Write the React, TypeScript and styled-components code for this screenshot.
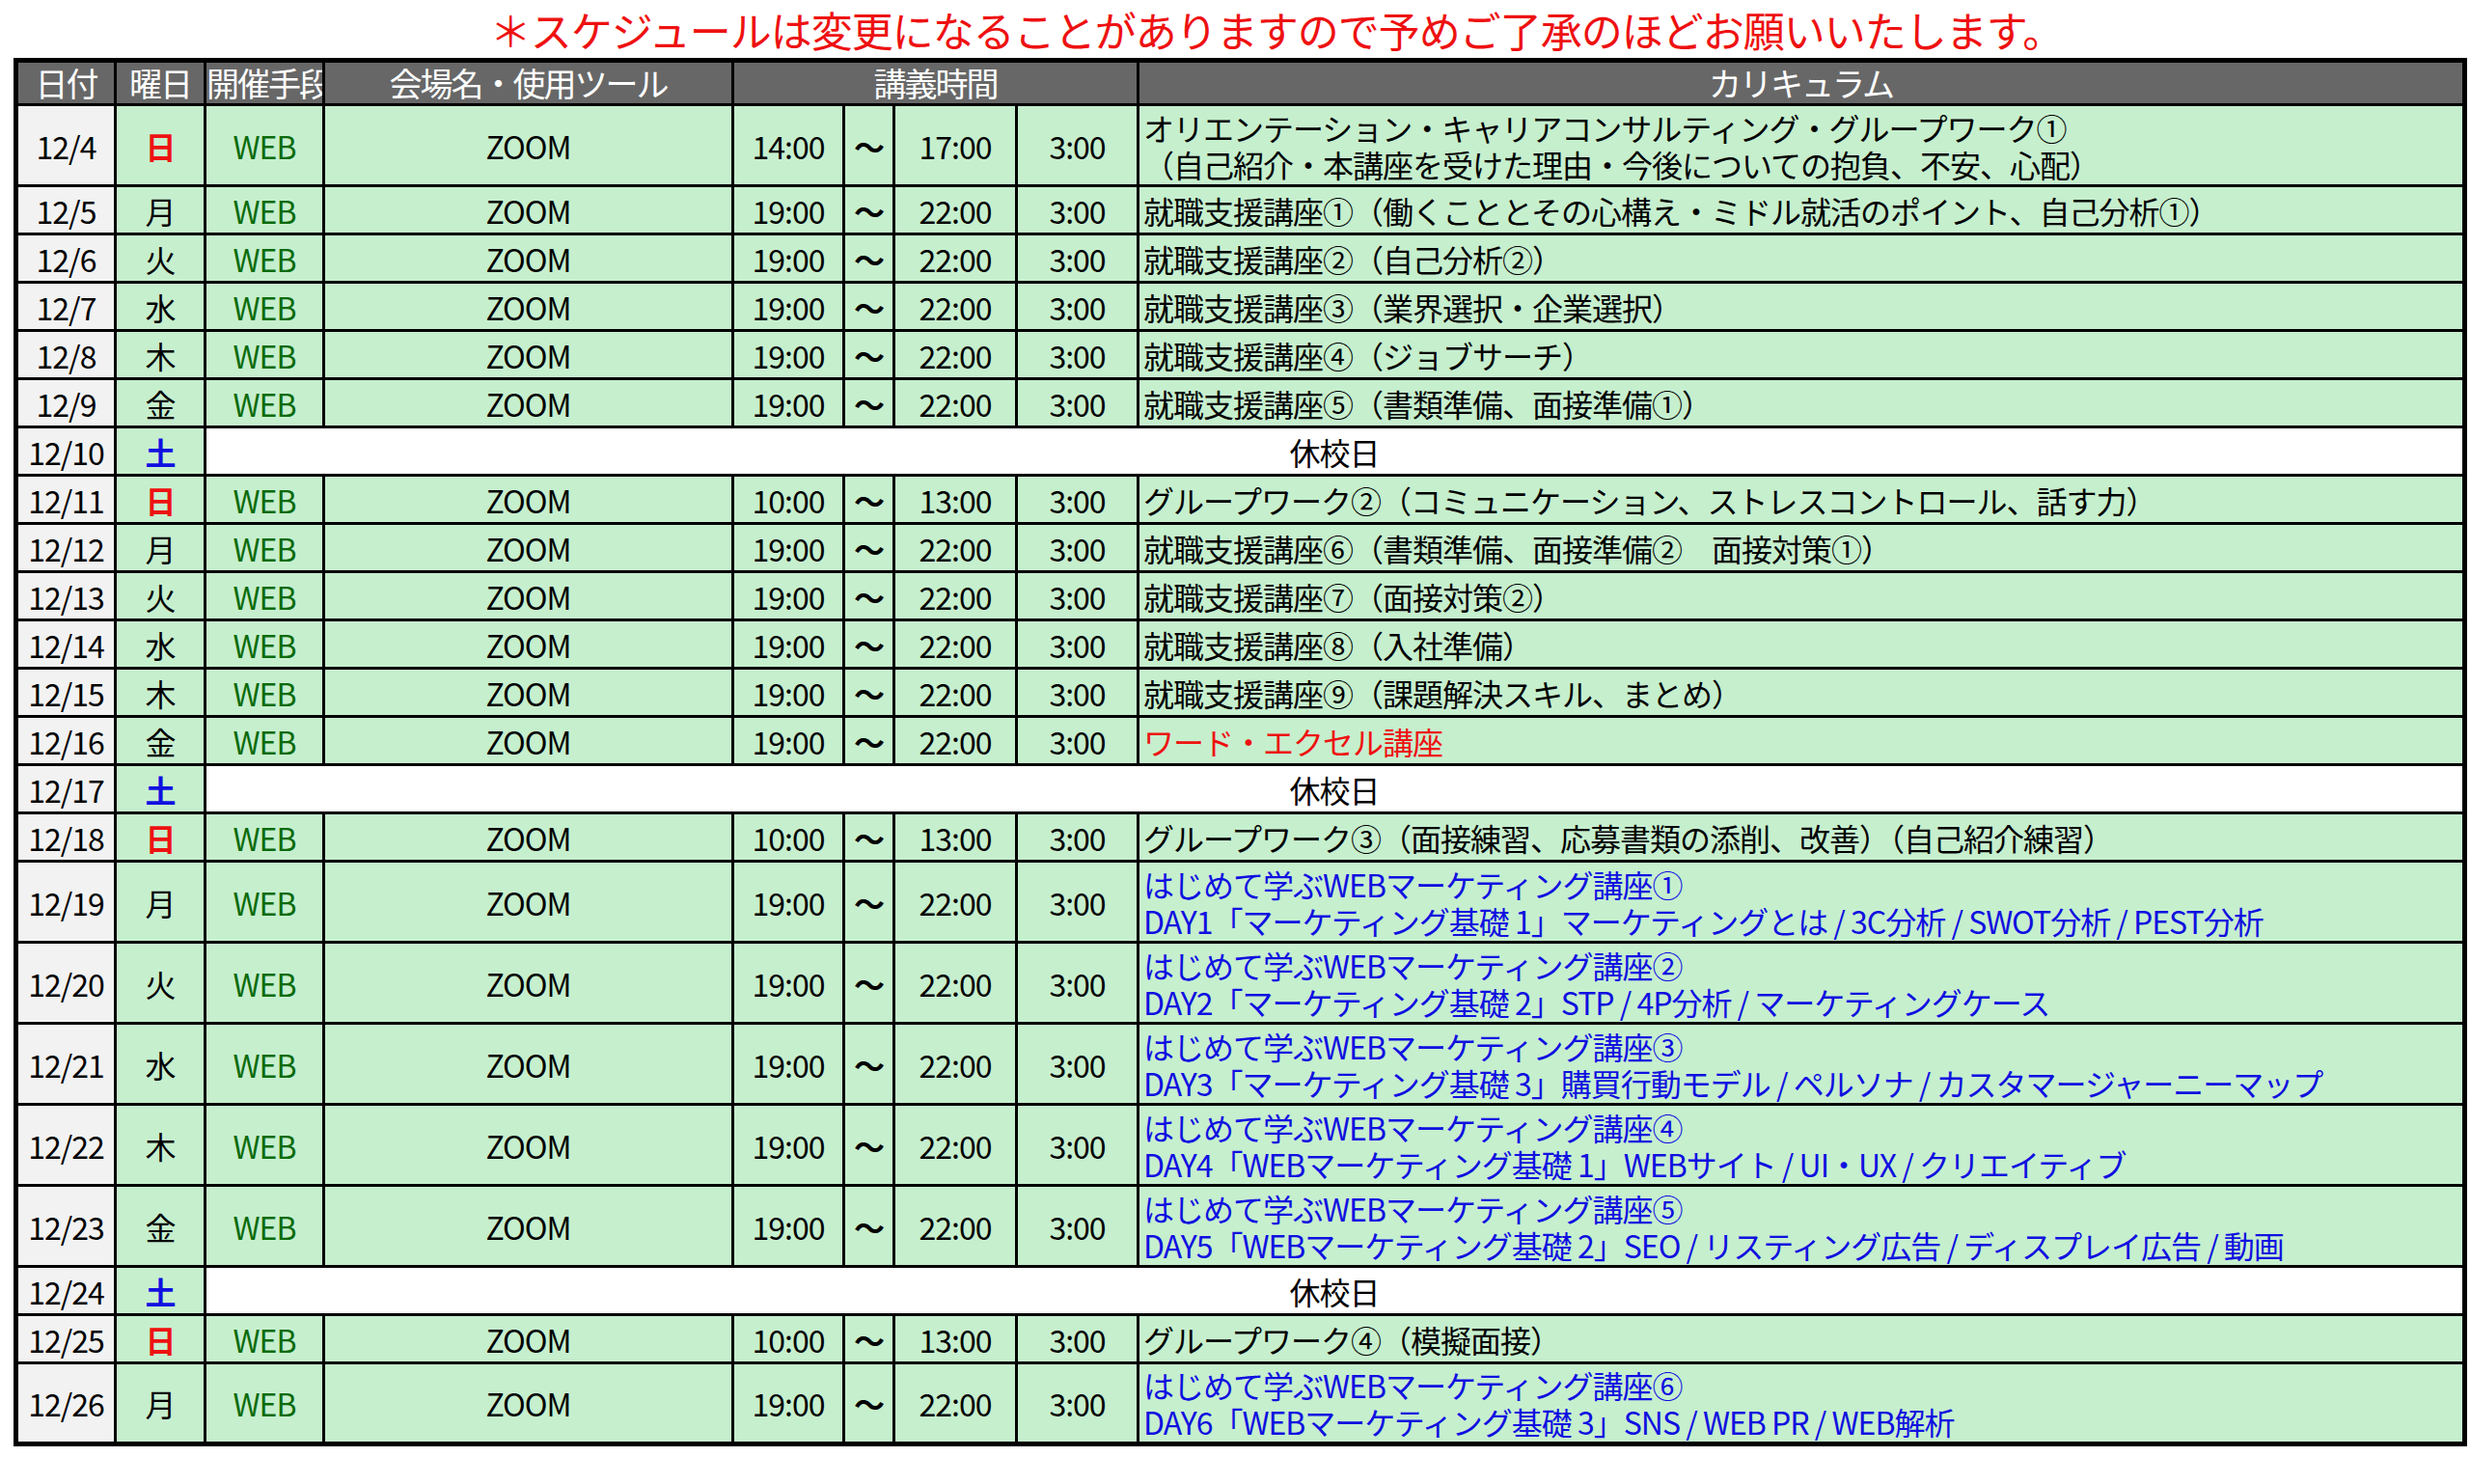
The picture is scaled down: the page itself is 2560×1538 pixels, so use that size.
import React from "react";
import styled, { createGlobalStyle } from "styled-components";

const Global = createGlobalStyle`
  body { margin: 0; background: #fff; font-family: "Noto Sans CJK JP", "Liberation Sans", sans-serif; }
`;

const Page = styled.div`
  width: 2560px;
  height: 1538px;
  padding: 0 8px 0 14px;
  box-sizing: border-box;
`;

const Notice = styled.div`
  height: 60px;
  text-align: center;
  color: #ee1111;
  font-size: 43px;
  line-height: 60px;
  padding-left: 80px;
  letter-spacing: -1px;
  white-space: nowrap;
`;

const Table = styled.table`
  border-collapse: collapse;
  border: 5px solid #000;
  width: 2538px;
  table-layout: fixed;
  font-size: 32px;
  letter-spacing: -1px;
`;

const Th = styled.th`
  background: #676767;
  color: #fff;
  font-weight: 400;
  height: 42px;
  border: 3px solid #000;
  font-size: 34px;
  line-height: 38px;
  padding: 0;
  white-space: nowrap;
  overflow: hidden;
  letter-spacing: -2px;
`;

const Td = styled.td<{ $bg?: string; $color?: string; $bold?: boolean; $left?: boolean }>`
  background: ${(p) => p.$bg || "#c6efce"};
  color: ${(p) => p.$color || "#000"};
  font-weight: ${(p) => (p.$bold ? 700 : 400)};
  text-align: ${(p) => (p.$left ? "left" : "center")};
  border: 3px solid #000;
  padding: 0 4px;
  line-height: 38px;
  white-space: nowrap;
  overflow: hidden;
`;

const Tr = styled.tr<{ $double?: boolean }>`
  height: ${(p) => (p.$double ? 84 : 50)}px;
`;

type Row = { d: string; w: string; s?: string; e?: string; c?: string[]; color?: string; off?: boolean };

const rows: Row[] = [
  { d: "12/4", w: "日", s: "14:00", e: "17:00", c: ["オリエンテーション・キャリアコンサルティング・グループワーク①", "（自己紹介・本講座を受けた理由・今後についての抱負、不安、心配）"] },
  { d: "12/5", w: "月", s: "19:00", e: "22:00", c: ["就職支援講座①（働くこととその心構え・ミドル就活のポイント、自己分析①）"] },
  { d: "12/6", w: "火", s: "19:00", e: "22:00", c: ["就職支援講座②（自己分析②）"] },
  { d: "12/7", w: "水", s: "19:00", e: "22:00", c: ["就職支援講座③（業界選択・企業選択）"] },
  { d: "12/8", w: "木", s: "19:00", e: "22:00", c: ["就職支援講座④（ジョブサーチ）"] },
  { d: "12/9", w: "金", s: "19:00", e: "22:00", c: ["就職支援講座⑤（書類準備、面接準備①）"] },
  { d: "12/10", w: "土", off: true },
  { d: "12/11", w: "日", s: "10:00", e: "13:00", c: ["グループワーク②（コミュニケーション、ストレスコントロール、話す力）"] },
  { d: "12/12", w: "月", s: "19:00", e: "22:00", c: ["就職支援講座⑥（書類準備、面接準備②　面接対策①）"] },
  { d: "12/13", w: "火", s: "19:00", e: "22:00", c: ["就職支援講座⑦（面接対策②）"] },
  { d: "12/14", w: "水", s: "19:00", e: "22:00", c: ["就職支援講座⑧（入社準備）"] },
  { d: "12/15", w: "木", s: "19:00", e: "22:00", c: ["就職支援講座⑨（課題解決スキル、まとめ）"] },
  { d: "12/16", w: "金", s: "19:00", e: "22:00", c: ["ワード・エクセル講座"], color: "#ee1111" },
  { d: "12/17", w: "土", off: true },
  { d: "12/18", w: "日", s: "10:00", e: "13:00", c: ["グループワーク③（面接練習、応募書類の添削、改善）（自己紹介練習）"] },
  { d: "12/19", w: "月", s: "19:00", e: "22:00", color: "#1010e0", c: ["はじめて学ぶWEBマーケティング講座①", "DAY1「マーケティング基礎 1」マーケティングとは / 3C分析 / SWOT分析 / PEST分析"] },
  { d: "12/20", w: "火", s: "19:00", e: "22:00", color: "#1010e0", c: ["はじめて学ぶWEBマーケティング講座②", "DAY2「マーケティング基礎 2」STP / 4P分析 / マーケティングケース"] },
  { d: "12/21", w: "水", s: "19:00", e: "22:00", color: "#1010e0", c: ["はじめて学ぶWEBマーケティング講座③", "DAY3「マーケティング基礎 3」購買行動モデル / ペルソナ / カスタマージャーニーマップ"] },
  { d: "12/22", w: "木", s: "19:00", e: "22:00", color: "#1010e0", c: ["はじめて学ぶWEBマーケティング講座④", "DAY4「WEBマーケティング基礎 1」WEBサイト / UI・UX / クリエイティブ"] },
  { d: "12/23", w: "金", s: "19:00", e: "22:00", color: "#1010e0", c: ["はじめて学ぶWEBマーケティング講座⑤", "DAY5「WEBマーケティング基礎 2」SEO / リスティング広告 / ディスプレイ広告 / 動画"] },
  { d: "12/24", w: "土", off: true },
  { d: "12/25", w: "日", s: "10:00", e: "13:00", c: ["グループワーク④（模擬面接）"] },
  { d: "12/26", w: "月", s: "19:00", e: "22:00", color: "#1010e0", c: ["はじめて学ぶWEBマーケティング講座⑥", "DAY6「WEBマーケティング基礎 3」SNS / WEB PR / WEB解析"] },
];

const dayColor = (w: string) => (w === "日" ? "#ee1111" : w === "土" ? "#1010e0" : "#000");

export default function App() {
  return (
    <Page>
      <Global />
      <Notice>＊スケジュールは変更になることがありますので予めご了承のほどお願いいたします。</Notice>
      <Table>
        <colgroup>
          {[103, 93, 123, 424, 115, 52, 127, 126, 1375].map((w, i) => (
            <col key={i} style={{ width: w }} />
          ))}
        </colgroup>
        <thead>
          <tr>
            <Th>日付</Th>
            <Th>曜日</Th>
            <Th>開催手段</Th>
            <Th>会場名・使用ツール</Th>
            <Th colSpan={4}>講義時間</Th>
            <Th>カリキュラム</Th>
          </tr>
        </thead>
        <tbody>
          {rows.map((r) => {
            const dbl = !!r.c && r.c.length > 1;
            const wd = r.w === "日" || r.w === "土";
            return (
              <Tr key={r.d} $double={dbl}>
                <Td $bg="#f2f2f2">{r.d}</Td>
                <Td $color={dayColor(r.w)} $bold={wd}>{r.w}</Td>
                {r.off ? (
                  <Td colSpan={7} $bg="#fff">休校日</Td>
                ) : (
                  <>
                    <Td $color="#0b6b0b">WEB</Td>
                    <Td>ZOOM</Td>
                    <Td>{r.s}</Td>
                    <Td $bold>～</Td>
                    <Td>{r.e}</Td>
                    <Td>3:00</Td>
                    <Td $left $color={r.color}>
                      {r.c!.map((l, i) => (
                        <div key={i}>{l}</div>
                      ))}
                    </Td>
                  </>
                )}
              </Tr>
            );
          })}
        </tbody>
      </Table>
    </Page>
  );
}
